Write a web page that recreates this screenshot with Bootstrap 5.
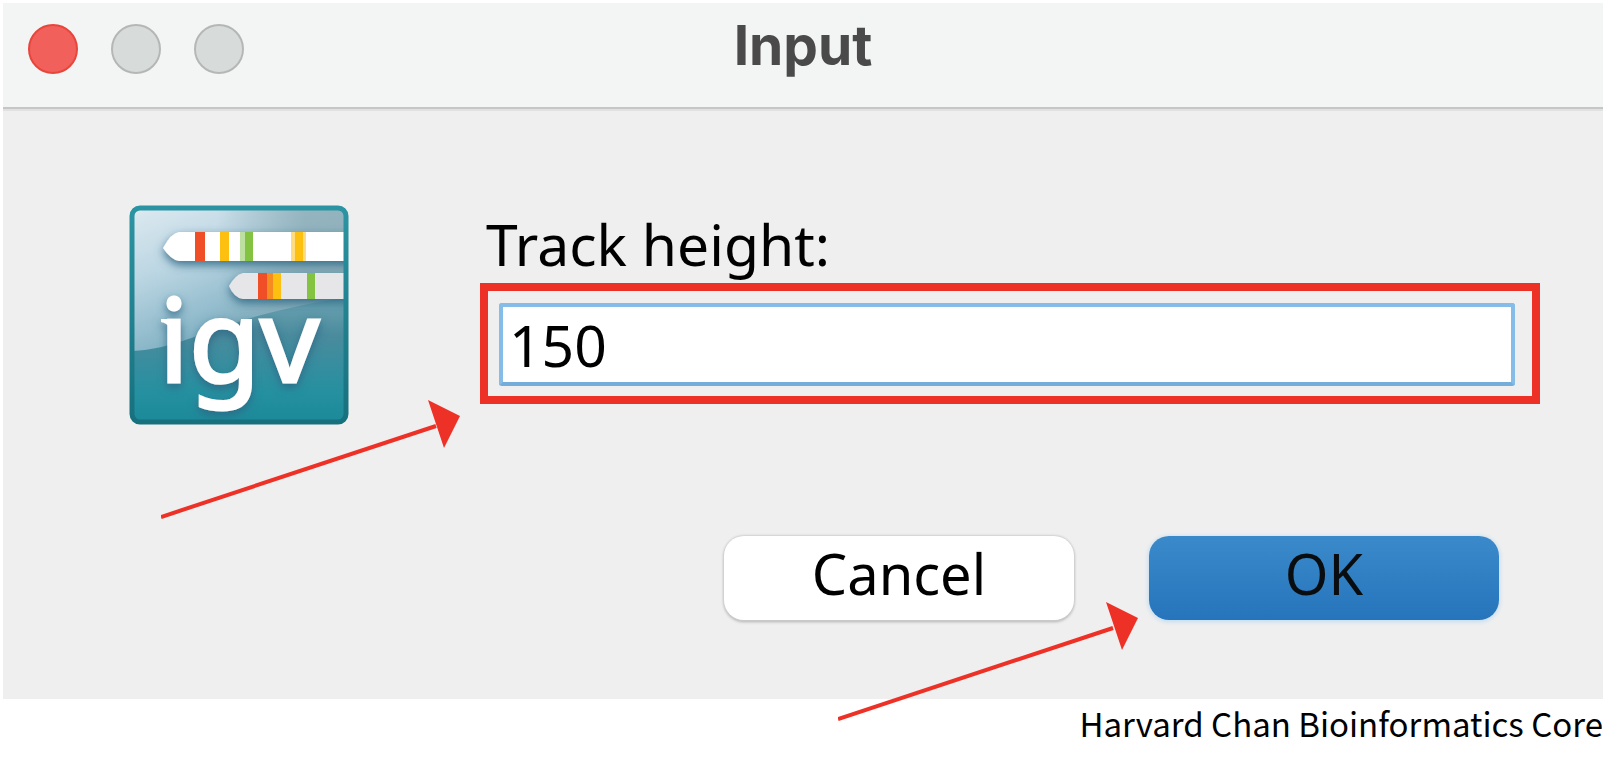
<!DOCTYPE html>
<html lang="en">
<head>
<meta charset="utf-8">
<meta name="viewport" content="width=device-width, initial-scale=1">
<title>Input</title>
<link href="https://cdn.jsdelivr.net/npm/bootstrap@5.3.0/dist/css/bootstrap.min.css" rel="stylesheet">
<style>
  body { font-family: "Noto Sans", sans-serif; color: #000; background: #fff; padding: 3px; }
  .dialog-window { background: #efefef; }
  .title-bar { background: #f3f5f4; height: 108px; padding: 21px 25px; border-bottom: 2px solid #e1e1e1; box-shadow: inset 0 -2px #c6c6c6; }
  .title-side { flex: 1 1 0; gap: 33px; }
  .window-title { font: 700 55px/43px Inter, sans-serif; color: #4a4a4a; }
  .dot { width: 50px; height: 50px; padding: 0; border: 2px solid #b4b7b6; border-radius: 50%; background: #d7dbda; }
  .dot-close { background: #f1605b; border-color: #e8453c; }
  .prompt { padding: 94px 63px 0 126px; gap: 131px; }
  .app-icon { width: 220px; height: 220px; }
  .field-label { font-size: 57px; line-height: 60px; margin: 9px 0 9px 6px; }
  .highlight { border: 8px solid #ee3127; padding: 12px 17px 10px 11px; }
  .height-input { height: 83px; padding: 0 6px; font-size: 57px; line-height: 72px; color: #000; border: 4px solid #85bde8; border-bottom-color: #74add9; border-radius: 3px; }
  .height-input:focus { color: #000; border-color: #85bde8; box-shadow: none; }
  .actions { padding: 111px 104px 79px; gap: 75px; }
  .action-btn { width: 350px; height: 84px; padding: 0 0 10px; border: 0; border-radius: 20px; font-size: 56px; line-height: 72px; color: #000; }
  .btn-plain, .btn-plain:hover { background: #fff; color: #000; box-shadow: 0 0 2px 1px #d0d0d0, 0 2px 3px #b0b0b0; }
  .btn-main, .btn-main:hover { background: linear-gradient(#3a8acb, #2674bb); color: #0a0d10; box-shadow: 0 1px 4px 1px #c3dcf0; }
  .arrow { position: absolute; width: 300px; height: 121px; pointer-events: none; }
  .arrow-field { right: 100%; top: 100%; margin: 3px 27px 0 0; }
  .arrow-ok { right: 100%; top: 65px; margin-right: 11px; }
  .credit { font: 33px/40px "Noto Sans CJK SC", sans-serif; margin-top: 4px; }
</style>
</head>
<body>
<main class="dialog-window">
  <header class="title-bar d-flex align-items-start">
    <div class="title-side d-flex">
      <button class="dot dot-close" type="button" aria-label="Close"></button>
      <button class="dot" type="button" aria-label="Minimize"></button>
      <button class="dot" type="button" aria-label="Zoom"></button>
    </div>
    <h1 class="window-title mb-0">Input</h1>
    <div class="title-side"></div>
  </header>
  <form>
    <div class="prompt d-flex align-items-start">
      <svg class="app-icon flex-shrink-0" viewBox="0 0 220 220" role="img" aria-label="IGV">
        <defs>
          <linearGradient id="sky" x1="0" y1="0" x2="0.4" y2="1">
            <stop offset="0" stop-color="#dfebf1"/><stop offset="0.3" stop-color="#bcd6e3"/><stop offset="0.65" stop-color="#7fb0c2"/><stop offset="1" stop-color="#4f96a8"/>
          </linearGradient>
          <linearGradient id="shade" x1="0" y1="0" x2="1" y2="0">
            <stop offset="0.4" stop-color="#8daeb8" stop-opacity="0"/><stop offset="0.8" stop-color="#8daeb8" stop-opacity="0.85"/>
          </linearGradient>
          <linearGradient id="sea" x1="0" y1="0" x2="0" y2="1">
            <stop offset="0" stop-color="#6ea5b3"/><stop offset="0.3" stop-color="#4a8b9d"/><stop offset="0.75" stop-color="#2490a0"/><stop offset="1" stop-color="#1b8998"/>
          </linearGradient>
          <linearGradient id="edge" x1="0" y1="0" x2="0" y2="1">
            <stop offset="0" stop-color="#2b94a2"/><stop offset="1" stop-color="#17707e"/>
          </linearGradient>
          <filter id="drop" x="-20%" y="-20%" width="140%" height="150%">
            <feDropShadow dx="0" dy="4" stdDeviation="5" flood-color="#2f6685" flood-opacity="0.9"/>
          </filter>
          <clipPath id="tile"><rect x="3" y="3" width="214" height="214" rx="8"/></clipPath>
        </defs>
        <g clip-path="url(#tile)">
          <rect width="220" height="220" fill="url(#sky)"/>
          <rect width="220" height="220" fill="url(#shade)"/>
          <path d="M0 146C60 145 85 112 220 92V220H0Z" fill="url(#sea)"/>
          <g filter="url(#drop)">
            <path d="M230 27H50Q42 28 34 43Q42 55 50 56H230Z" fill="#fff"/>
            <path d="M230 68H114Q106 70 100 81Q105 93 114 94H230Z" fill="#e6e6e9"/>
          </g>
          <path d="M66 27h10v29h-10z" fill="#f04e27"/>
          <path d="M91 27h9v29h-9zM166 27h8v29h-8zM144 68h8v26h-8z" fill="#fdbf10"/>
          <path d="M162 27h4v29h-4zM174 27h3v29h-3z" fill="#fedc7f"/>
          <path d="M111 27h13v29h-13z" fill="#bddf9f"/>
          <path d="M116 27h8v29h-8zM178 68h8v26h-8z" fill="#83c341"/>
          <path d="M129 68h9v26h-9z" fill="#f04e27"/>
          <path d="M138 68h6v26h-6z" fill="#f68b1f"/>
          <g filter="url(#drop)" fill="#fff">
            <text x="30" y="177" font-family="Noto Sans, sans-serif" font-size="116" stroke="#fff" stroke-width="3">igv</text>
            <path d="M32 114H42V124Q38 118 32 117Z"/>
          </g>
        </g>
        <rect x="3" y="3" width="214" height="214" rx="8" fill="none" stroke="url(#edge)" stroke-width="5"/>
      </svg>
      <div class="flex-grow-1">
        <label class="field-label d-block" for="track-height">Track height:</label>
        <div class="highlight position-relative">
          <input class="form-control height-input" id="track-height" type="text" value="150">
          <svg class="arrow arrow-field" viewBox="0 0 300 121" aria-hidden="true">
            <path d="M0 118L275 27" stroke="#ee3127" stroke-width="4"/><path d="M267 1L299 17L283 49Z" fill="#ee3127"/>
          </svg>
        </div>
      </div>
    </div>
    <div class="actions d-flex justify-content-end">
      <button class="btn action-btn btn-plain" type="button">Cancel</button>
      <div class="position-relative">
        <button class="btn action-btn btn-main" type="submit">OK</button>
        <svg class="arrow arrow-ok" viewBox="0 0 300 121" aria-hidden="true">
          <path d="M0 118L275 27" stroke="#ee3127" stroke-width="4"/><path d="M268 1L300 17L284 49Z" fill="#ee3127"/>
        </svg>
      </div>
    </div>
  </form>
</main>
<footer class="credit text-end">Harvard Chan Bioinformatics Core</footer>
<script src="https://cdn.jsdelivr.net/npm/bootstrap@5.3.0/dist/js/bootstrap.bundle.min.js"></script>
</body>
</html>
